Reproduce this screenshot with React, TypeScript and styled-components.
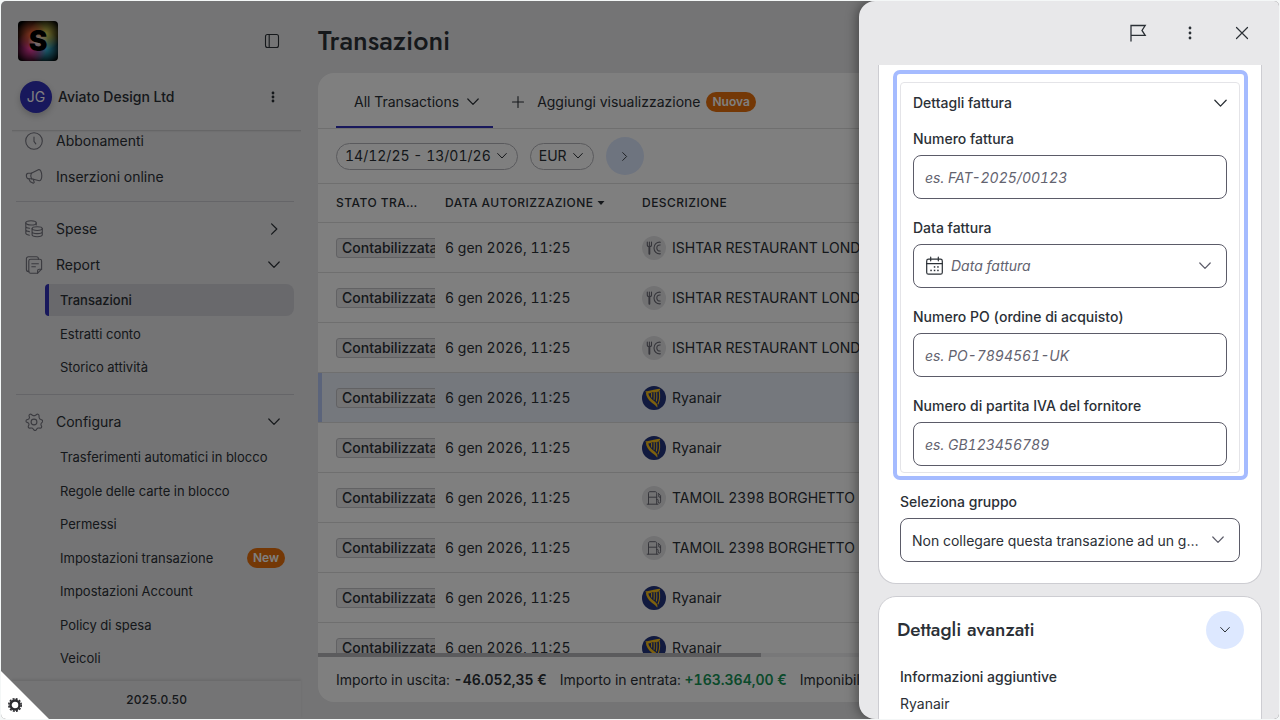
import React from "react";
import styled, { createGlobalStyle, css } from "styled-components";

const GlobalStyle = createGlobalStyle`
  *, *::before, *::after { box-sizing: border-box; }
  html, body { margin: 0; padding: 0; }
  body {
    background: #f4f7f7;
    color: #2b3036;
    font-family: Inter, "Liberation Sans", sans-serif;
    font-size: 14px;
    font-variant-numeric: tabular-nums;
    line-height: 20px;
  }
  button, input, select { font: inherit; color: inherit; font-variant-numeric: inherit; }
  ul { list-style: none; margin: 0; padding: 0; }
  h1, h2, p { margin: 0; }
  svg { display: block; flex: none; }
`;

const Frame = styled.div`
  position: relative;
  display: flex;
  height: 100vh;
  border: 1px solid #f4f7f7;
  border-radius: 6px;
  overflow: hidden;
  background: #e8e8ea;
`;

const Sidebar = styled.aside`
  display: flex;
  flex-direction: column;
  flex: none;
  width: 300px;
`;

const BrandRow = styled.div`
  display: flex;
  align-items: center;
  justify-content: space-between;
  padding: 20px 19px 0 17px;
`;

const Logo = styled.div`
  display: flex;
  align-items: center;
  justify-content: center;
  width: 40px;
  height: 40px;
  border-radius: 4px;
  background:
    radial-gradient(circle at 50% 50%, #ffffff 0, rgba(255, 255, 255, 0) 36%),
    radial-gradient(circle at 34% 34%, #ff6a3c 0, rgba(255, 80, 40, 0) 42%),
    radial-gradient(circle at 68% 32%, #e8e05a 0, rgba(170, 200, 60, 0) 42%),
    radial-gradient(circle at 32% 68%, #ff3fae 0, rgba(230, 40, 150, 0) 43%),
    radial-gradient(circle at 68% 68%, #39c8f0 0, rgba(30, 150, 210, 0) 43%),
    #000000;
  color: #000000;
  font-size: 28px;
  font-weight: 900;
  line-height: 40px;
`;

const IconButton = styled.button`
  display: flex;
  align-items: center;
  justify-content: center;
  width: 20px;
  height: 20px;
  padding: 0;
  border: 0;
  background: none;
  color: #2b3036;
`;

const AccountRow = styled.div`
  display: flex;
  align-items: center;
  gap: 6px;
  padding: 20px 18px 17px 19px;
`;

const Avatar = styled.span`
  display: flex;
  align-items: center;
  justify-content: center;
  width: 32px;
  height: 32px;
  border-radius: 50%;
  background: #3030b8;
  color: #ffffff;
  box-shadow: 0 3px 6px rgba(0, 0, 0, 0.2);
`;

const AccountName = styled.span`
  flex: 1;
  font-weight: 500;
`;

const Nav = styled.nav`
  flex: 1;
  min-height: 0;
  margin-left: 11px;
  overflow: hidden;
  box-shadow: inset 0 3px 2px -2px rgba(0, 0, 0, 0.16);
`;

const NavList = styled.div`
  margin: -7px 7px 0 4px;
`;

const Divider = styled.hr`
  height: 1px;
  margin: 6px 0 9px;
  border: 0;
  background: #cbcbd0;
`;

const NavItem = styled.a`
  display: flex;
  align-items: center;
  gap: 13px;
  height: 36px;
  padding: 0 14px 0 9px;
  color: #2b3036;
  text-decoration: none;

  span { flex: 1; }
  svg:first-child { color: #74747e; }
`;

const SubList = styled.ul<{ $height: number }>`
  display: grid;
  grid-auto-rows: 1fr;
  height: ${(p) => p.$height}px;
  margin: 0 0 10px 29px;
`;

const SubItem = styled.a<{ $active?: boolean }>`
  display: flex;
  align-items: center;
  justify-content: space-between;
  height: 32px;
  margin-top: 1px;
  padding: 0 9px 0 11px;
  border-left: 4px solid transparent;
  border-radius: 4px 8px 8px 4px;
  color: #2b3036;
  font-size: 13px;
  text-decoration: none;
  ${(p) =>
    p.$active &&
    css`
      border-left-color: #3030b8;
      background: #d2d2d8;
      font-weight: 500;
    `}
`;

const Badge = styled.span`
  height: 20px;
  padding: 0 6px;
  border-radius: 10px;
  background: #e8700c;
  color: #ffffff;
  font-size: 12px;
  font-weight: 600;
  line-height: 20px;
`;

const Version = styled.footer`
  height: 38px;
  margin-left: 11px;
  box-shadow: 0 -2px 2px rgba(0, 0, 0, 0.08);
  font-size: 12px;
  font-weight: 500;
  line-height: 38px;
  text-align: center;
`;

const Main = styled.main`
  display: flex;
  flex: 1;
  flex-direction: column;
  min-width: 0;
  padding: 20px 18px 17px 17px;
`;

const PageTitle = styled.h1`
  margin-bottom: 12px;
  font-family: Jost, Lato, sans-serif;
  font-size: 27px;
  font-weight: 500;
  line-height: 40px;
`;

const Card = styled.section`
  display: flex;
  flex: 1;
  flex-direction: column;
  min-height: 0;
  border-radius: 16px;
  background: #ffffff;
  overflow: hidden;
`;

const TabRow = styled.div`
  display: flex;
  flex: none;
  height: 56px;
  padding: 0 18px;
  border-bottom: 1px solid #dededf;
`;

const Tab = styled.button`
  display: flex;
  align-items: center;
  gap: 8px;
  height: 55px;
  padding: 4px 14px 0 18px;
  border: 0;
  border-bottom: 2px solid #3030b8;
  background: none;
`;

const AddView = styled.button`
  display: flex;
  align-items: center;
  gap: 6px;
  height: 55px;
  margin-left: 18px;
  padding: 3px 0 0;
  border: 0;
  background: none;
`;

const AddViewLabel = styled.span`
  display: flex;
  align-items: center;
  gap: 12px;
`;

const FilterRow = styled.div`
  display: flex;
  flex: none;
  align-items: center;
  gap: 12px;
  height: 55px;
  padding: 0 18px;
  border-bottom: 1px solid #dededf;
`;

const Pill = styled.button`
  display: flex;
  align-items: center;
  gap: 6px;
  height: 27px;
  padding: 0 10px 0 8px;
  border: 1px solid #b4b4ba;
  border-radius: 14px;
  background: none;
`;

const RoundButton = styled.button`
  display: flex;
  align-items: center;
  justify-content: center;
  flex: none;
  width: 38px;
  height: 38px;
  padding: 0;
  border: 0;
  border-radius: 50%;
  background: #dde8ff;
`;

const TableArea = styled.div`
  flex: 1;
  min-height: 0;
  overflow: hidden;
`;

const Table = styled.table`
  width: 100%;
  border-collapse: separate;
  border-spacing: 0;
  table-layout: fixed;

  th, td {
    padding: 0;
    border-bottom: 1px solid #dededf;
    text-align: left;
    white-space: nowrap;
    overflow: hidden;
  }
  th {
    height: 39px;
    font-size: 12px;
    font-weight: 500;
    letter-spacing: 0.04em;
  }
  td { height: 50px; }
  th:first-child, td:first-child { padding-left: 18px; }
`;

const HeadLabel = styled.span`
  display: flex;
  align-items: center;
  gap: 3px;
`;

const Row = styled.tr<{ $selected: boolean }>`
  ${(p) =>
    p.$selected &&
    css`
      background: #ebf1fb;
      td:first-child { box-shadow: inset 4px 0 0 #b6c8f6; }
    `}
`;

const Clip = styled.div`
  width: 99px;
  overflow: hidden;
`;

const Status = styled.span`
  display: inline-block;
  height: 20px;
  padding: 0 5px;
  border: 1px solid #c4c4c8;
  border-radius: 3px;
  background: #e8e8ea;
  font-weight: 500;
  line-height: 18px;
  vertical-align: middle;
`;

const Merchant = styled.div`
  display: flex;
  align-items: center;
  gap: 6px;
`;

const MerchantIcon = styled.span`
  display: flex;
  align-items: center;
  justify-content: center;
  width: 24px;
  height: 24px;
  border-radius: 50%;
  background: #e4e4e7;
  color: #6b6b75;
`;

const ScrollTrack = styled.div`
  flex: none;
  height: 4px;
  background: #f0f0f2;
`;

const ScrollThumb = styled.div`
  width: 47%;
  height: 4px;
  background: #b6b6bb;
`;

const Totals = styled.footer`
  display: flex;
  flex: none;
  align-items: center;
  gap: 13px;
  height: 45px;
  padding: 0 18px;
  white-space: nowrap;
`;

const Amount = styled.strong<{ $positive?: boolean }>`
  font-weight: 600;
  color: ${(p) => (p.$positive ? "#169557" : "inherit")};
`;

const Backdrop = styled.div`
  position: absolute;
  inset: 0;
  background: rgba(0, 0, 0, 0.5);
`;

const SettingsCorner = styled.button`
  position: absolute;
  bottom: 0;
  left: 0;
  display: flex;
  align-items: flex-end;
  width: 48px;
  height: 48px;
  padding: 0 0 7px 7px;
  border: 0;
  background: #ffffff;
  clip-path: polygon(0 0, 100% 100%, 0 100%);
  color: #2a2a2e;
`;

const Drawer = styled.aside`
  position: absolute;
  top: 0;
  right: 0;
  bottom: 0;
  display: flex;
  flex-direction: column;
  width: 420px;
  border-radius: 16px 0 0 16px;
  background: #e8e8ea;
  box-shadow: -2px 0 12px rgba(0, 0, 0, 0.4);
  overflow: hidden;
`;

const DrawerHeader = styled.header`
  display: flex;
  flex: none;
  align-items: center;
  justify-content: flex-end;
  gap: 32px;
  height: 64px;
  padding: 0 27px;
`;

const DrawerBody = styled.div`
  display: flex;
  flex: 1;
  flex-direction: column;
  gap: 12px;
  min-height: 0;
  padding: 0 17px 0 19px;
  overflow: hidden;
`;

const Panel = styled.section<{ $continued?: boolean }>`
  flex: none;
  padding: ${(p) => (p.$continued ? "5px 21px 21px" : "14px 17px 21px 21px")};
  border: 1px solid #cdcdd2;
  border-radius: 18px;
  background: #ffffff;
  ${(p) =>
    p.$continued &&
    css`
      border-top: 0;
      border-top-left-radius: 0;
      border-top-right-radius: 0;
    `}
`;

const Highlight = styled.div`
  margin: 0 -8px 12px -7px;
  padding: 8px 4px 3px 3px;
  border: 4px solid #a5bbff;
  border-radius: 7px;
`;

const InvoiceBox = styled.div`
  display: flex;
  flex-direction: column;
  gap: 19px;
  padding: 0 12px 6px;
  border: 1px solid #e4e4e8;
  border-radius: 4px;
`;

const InvoiceToggle = styled.button`
  display: flex;
  align-items: center;
  justify-content: space-between;
  height: 40px;
  margin-bottom: -13px;
  padding: 0;
  border: 0;
  background: none;
  font-weight: 500;
`;

const Field = styled.div`
  display: flex;
  flex-direction: column;
  gap: 6px;
`;

const Label = styled.label`
  font-weight: 500;
`;

const controlBox = css`
  width: 100%;
  height: 44px;
  border: 1px solid #5b5b68;
  border-radius: 8px;
  background: #ffffff;
`;

const TextInput = styled.input`
  ${controlBox}
  padding: 1px 11px 0;

  &::placeholder {
    color: #63636f;
    font-style: italic;
    opacity: 1;
  }
`;

const DateButton = styled.button`
  ${controlBox}
  display: flex;
  align-items: center;
  gap: 6px;
  padding: 0 15px 0 11px;
  text-align: left;

  span {
    flex: 1;
    color: #63636f;
    font-style: italic;
  }
`;

const SelectWrap = styled.div`
  display: grid;
  align-items: center;

  > * { grid-area: 1 / 1; }
  svg {
    justify-self: end;
    margin-right: 16px;
    pointer-events: none;
  }
`;

const Select = styled.select`
  ${controlBox}
  padding: 1px 40px 0 11px;
  appearance: none;
  text-overflow: ellipsis;
  white-space: nowrap;
  overflow: hidden;
`;

const PanelHeader = styled.div`
  display: flex;
  align-items: center;
  justify-content: space-between;
  margin: 0 0 18px -3px;
`;

const PanelTitle = styled.h2`
  font-family: Jost, Lato, sans-serif;
  font-size: 19px;
  font-weight: 500;
  line-height: 28px;
`;

const InfoLabel = styled.p`
  font-weight: 500;
`;

const InfoValue = styled.p`
  margin-top: 7px;
`;

type ChevronProps = { dir?: "down" | "right"; size?: number; color?: string };

const Chevron = ({ dir = "down", size = 12, color = "currentColor" }: ChevronProps) => (
  <svg width={size} height={size} viewBox="0 0 12 12" fill="none" stroke={color} strokeWidth="1.2" strokeLinecap="round" strokeLinejoin="round" aria-hidden="true">
    <path d={dir === "down" ? "M.8 3 6 8.4 11.2 3" : "M3.6.8 8.8 6l-5.2 5.2"} />
  </svg>
);

const Dots = ({ gap = 5 }: { gap?: number }) => (
  <svg width="16" height="16" viewBox="0 0 16 16" fill="currentColor" aria-hidden="true">
    <circle cx="8" cy={8 - gap} r="1.4" />
    <circle cx="8" cy="8" r="1.4" />
    <circle cx="8" cy={8 + gap} r="1.4" />
  </svg>
);

const stroke = { fill: "none", stroke: "currentColor", strokeLinecap: "round", strokeLinejoin: "round", "aria-hidden": true } as const;

const PanelIcon = () => (
  <svg width="16" height="16" viewBox="0 0 16 16" strokeWidth="1.1" {...stroke}>
    <rect x="1.5" y="1.5" width="13" height="13" rx="2" />
    <path d="M5.2 1.5v13" />
  </svg>
);

const ClockIcon = () => (
  <svg width="18" height="18" viewBox="0 0 18 18" strokeWidth="1.1" {...stroke}>
    <circle cx="9" cy="9" r="8.3" />
    <path d="M9 5v4.4l1.8 2.4" />
  </svg>
);

const MegaphoneIcon = () => (
  <svg width="18" height="18" viewBox="0 0 18 18" strokeWidth="1.1" {...stroke}>
    <path d="M6.3 5.3 13.8 1.6c1.6-.3 3 2.7 3 6.1s-1.2 5.2-2.6 5.1l-7.6-2" />
    <path d="M6.3 5.3H3.2C1.8 5.5 1.2 6.6 1.4 8.2s1 2.6 2.3 2.6h2.9" />
    <path d="M6.3 5.3c-.8 1.8-.7 3.8.3 5.5M3.8 10.8l1.5 3 2.6 1.3c1 .2 1.6-.6 1.2-1.4L8.2 11.3" />
  </svg>
);

const CoinsIcon = () => (
  <svg width="18" height="18" viewBox="0 0 18 18" strokeWidth="1.1" {...stroke}>
    <ellipse cx="6" cy="2.9" rx="5.2" ry="2.1" />
    <path d="M.8 2.9v10.4c0 .9 1.5 1.6 3.6 1.9M11.2 2.9v2M.8 6.4c0 .9 1.6 1.6 3.8 1.8M.8 9.8c0 .9 1.5 1.6 3.6 1.8" />
    <ellipse cx="12.2" cy="8.6" rx="5.1" ry="1.9" />
    <path d="M7.1 8.6v6.2c0 1.1 2.3 1.9 5.1 1.9s5.1-.8 5.1-1.9V8.6M7.1 11.7c0 1.1 2.3 1.9 5.1 1.9s5.1-.8 5.1-1.9" />
  </svg>
);

const ReportIcon = () => (
  <svg width="18" height="18" viewBox="0 0 18 18" strokeWidth="1.1" {...stroke}>
    <path d="M5.6 3.2h9.2a1.8 1.8 0 0 1 1.8 1.8v8.2l-4 4H5.6a1.8 1.8 0 0 1-1.8-1.8V5a1.8 1.8 0 0 1 1.8-1.8Z" />
    <path d="M16.6 13.2h-2.4a1.6 1.6 0 0 0-1.6 1.6v2.4M6.8 7.7h6.6M6.8 10.7h3.6" />
    <path d="M3.8 15.4h-.4a2 2 0 0 1-2-2V2.8a2 2 0 0 1 2-2h8a2 2 0 0 1 2 2v.4" />
  </svg>
);

const GearIcon = () => (
  <svg width="18" height="18" viewBox="0 0 18 18" strokeWidth="1.1" {...stroke}>
    <circle cx="9" cy="9" r="2.9" />
    <path d="M6 1.2 7.5 2.3c.9.6 2.1.6 3 0L12 1.2c.9-.3 2 .4 2 1.4l.1 1.9c.1 1 .8 1.8 1.8 2l1 .4c.9.4 1 1.6.4 2.2l-.8.9a2.2 2.2 0 0 0-.3 2.4l.4.9c.3.9-.4 1.9-1.4 1.8l-1.6-.1a2.1 2.1 0 0 0-1.9 1.1l-.5.8c-.6.8-1.8.8-2.3 0l-.6-.8A2.1 2.1 0 0 0 6.4 15l-1.7.1c-1 .1-1.7-.9-1.4-1.8l.4-.9A2.2 2.2 0 0 0 3.4 10l-2-1c-.7-.7-.4-1.9.4-2.2l1-.3c1-.2 1.6-1 1.7-2L4 2.6c0-1 1.1-1.7 2-1.4Z" />
  </svg>
);

const RestaurantIcon = () => (
  <svg width="16" height="16" viewBox="0 0 16 16" strokeWidth="1.1" {...stroke}>
    <path d="M1.3 2v3c0 1 .8 1.7 2.1 1.7S5.5 6 5.5 5V2M3.4 2v11.8" />
    <path d="M3.4 7v6.8" strokeWidth="1.8" />
    <path d="M14.4 2.2C10.6 1.9 8 4.5 8 8s2.6 6.1 6.4 5.8M14.2 5c-2-.2-3.4 1.1-3.4 3s1.4 3.2 3.4 3" />
  </svg>
);

const FuelIcon = () => (
  <svg width="16" height="16" viewBox="0 0 16 16" strokeWidth="1" {...stroke}>
    <path d="M2.5 14V3.2c0-.9.6-1.5 1.5-1.5h5.2c.9 0 1.5.6 1.5 1.5V14M1.2 14.2h10.8M2.5 7.2h8.2" />
    <path d="M10.7 9.5h.8c.5 0 .7.3.7.8v1.5c0 .8.5 1.3 1.2 1.3s1.2-.5 1.2-1.3V5.5L12.4 3.3M12.8 4.4v2.4l1.8.7" />
  </svg>
);

const HarpLogo = () => (
  <svg width="24" height="24" viewBox="0 0 24 24" aria-hidden="true">
    <circle cx="12" cy="12" r="12" fill="#22347e" />
    <path d="M3.300 5c1.500.5 3-.3 5-.6 3.300-.5 6.200-1.500 10-1.600-.2 1.800-1.200 2.700-3 3.100-2.500.5-4.300-.2-6.300.8-1.200.6-2.200 1.200-3.200.6-1-.4-2-1-2.500-2.300Z" fill="#f8c01c" />
    <path d="M3.800 6.300c.4 4.500 2.400 7.600 6 10.500 2.400 1.800 4.600 3 5.400 5 .8-2.200 0-4.200-2.200-6C9.200 12.900 6.900 10.700 6.100 6.800Z" fill="#f8c01c" />
    <path d="M17.200 5c.9 4.600.6 8.700-1.200 13.200M14.700 6.200c.3 3.400.2 6-.3 9.200M12.100 6.300c.2 2.700.2 4.800 0 7.400M9.600 6.800v4.600" fill="none" stroke="#f8c01c" strokeWidth="1.100" />
  </svg>
);

const FlagIcon = () => (
  <svg width="18" height="18" viewBox="0 0 18 18" strokeWidth="1.3" {...stroke}>
    <path d="M2 17V1.5h14.200L13 6.400l3.200 4.900H2" strokeLinejoin="miter" />
  </svg>
);

const CloseIcon = () => (
  <svg width="14" height="14" viewBox="0 0 14 14" strokeWidth="1.2" {...stroke}>
    <path d="m1.500 1.500 11 11M12.500 1.500l-11 11" />
  </svg>
);

const PlusIcon = () => (
  <svg width="14" height="14" viewBox="0 0 14 14" strokeWidth="1.1" {...stroke}>
    <path d="M7 1.500v11M1.500 7h11" />
  </svg>
);

const CalendarIcon = () => (
  <svg width="20" height="20" viewBox="0 0 20 20" strokeWidth="1.2" {...stroke}>
    <rect x="1.700" y="3.200" width="15.600" height="15" rx="1.800" />
    <path d="M1.700 7.700h15.600M5.700 1.200v3.600M13.300 1.200v3.600" />
    <g fill="currentColor" stroke="none">
      <rect x="8.800" y="10.200" width="1.500" height="1.500" />
      <rect x="12.200" y="10.200" width="1.500" height="1.500" />
      <rect x="5.300" y="13.700" width="1.500" height="1.500" />
      <rect x="8.800" y="13.700" width="1.500" height="1.500" />
      <rect x="12.200" y="13.700" width="1.500" height="1.500" />
    </g>
  </svg>
);

const CogIcon = () => (
  <svg width="14" height="14" viewBox="0 0 14 14" fill="none" stroke="currentColor" aria-hidden="true">
    <circle cx="7" cy="7" r="4.500" strokeWidth="2.400" />
    <circle cx="7" cy="7" r="6.200" strokeWidth="1.600" strokeDasharray="2 1.246" />
  </svg>
);

const SortIcon = () => (
  <svg width="8" height="4" viewBox="0 0 8 4" fill="currentColor" aria-hidden="true">
    <path d="M.5 0h7L4 4Z" />
  </svg>
);

const reportLinks = ["Transazioni", "Estratti conto", "Storico attività"];
const configLinks = [
  "Trasferimenti automatici in blocco",
  "Regole delle carte in blocco",
  "Permessi",
  "Impostazioni transazione",
  "Impostazioni Account",
  "Policy di spesa",
  "Veicoli",
];

type Kind = "food" | "air" | "fuel";

const transactions: { name: string; kind: Kind; selected?: boolean }[] = [
  { name: "ISHTAR RESTAURANT LONDON", kind: "food" },
  { name: "ISHTAR RESTAURANT LONDON", kind: "food" },
  { name: "ISHTAR RESTAURANT LONDON", kind: "food" },
  { name: "Ryanair", kind: "air", selected: true },
  { name: "Ryanair", kind: "air" },
  { name: "TAMOIL 2398 BORGHETTO L", kind: "fuel" },
  { name: "TAMOIL 2398 BORGHETTO L", kind: "fuel" },
  { name: "Ryanair", kind: "air" },
  { name: "Ryanair", kind: "air" },
];

const kindIcon: Record<Kind, React.ReactNode> = {
  food: <RestaurantIcon />,
  air: <HarpLogo />,
  fuel: <FuelIcon />,
};

const TextField = ({ id, label, placeholder }: { id: string; label: string; placeholder: string }) => (
  <Field>
    <Label htmlFor={id}>{label}</Label>
    <TextInput id={id} type="text" placeholder={placeholder} />
  </Field>
);

export default function App() {
  return (
    <>
      <GlobalStyle />
      <Frame>
        <Sidebar>
          <BrandRow>
            <Logo>S</Logo>
            <IconButton aria-label="Comprimi menu">
              <PanelIcon />
            </IconButton>
          </BrandRow>
          <AccountRow>
            <Avatar>JG</Avatar>
            <AccountName>Aviato Design Ltd</AccountName>
            <IconButton aria-label="Menu account">
              <Dots gap={4} />
            </IconButton>
          </AccountRow>
          <Nav>
            <NavList>
              <NavItem href="#abbonamenti"><ClockIcon /><span>Abbonamenti</span></NavItem>
              <NavItem href="#inserzioni"><MegaphoneIcon /><span>Inserzioni online</span></NavItem>
              <Divider />
              <NavItem href="#spese"><CoinsIcon /><span>Spese</span><Chevron dir="right" /></NavItem>
              <NavItem href="#report"><ReportIcon /><span>Report</span><Chevron /></NavItem>
              <SubList $height={101}>
                {reportLinks.map((text, i) => (
                  <li key={text}><SubItem href="#report" $active={i === 0}>{text}</SubItem></li>
                ))}
              </SubList>
              <Divider />
              <NavItem href="#configura"><GearIcon /><span>Configura</span><Chevron /></NavItem>
              <SubList $height={235}>
                {configLinks.map((text) => (
                  <li key={text}>
                    <SubItem href="#configura">
                      {text}
                      {text === "Impostazioni transazione" && <Badge>New</Badge>}
                    </SubItem>
                  </li>
                ))}
              </SubList>
            </NavList>
          </Nav>
          <Version>2025.0.50</Version>
        </Sidebar>

        <Main>
          <PageTitle>Transazioni</PageTitle>
          <Card>
            <TabRow>
              <Tab>All Transactions <Chevron /></Tab>
              <AddView>
                <AddViewLabel><PlusIcon />Aggiungi visualizzazione</AddViewLabel>
                <Badge>Nuova</Badge>
              </AddView>
            </TabRow>
            <FilterRow>
              <Pill>14/12/25 - 13/01/26 <Chevron size={10} /></Pill>
              <Pill>EUR <Chevron size={10} /></Pill>
              <RoundButton aria-label="Altri filtri"><Chevron dir="right" size={9} /></RoundButton>
            </FilterRow>
            <TableArea>
              <Table>
                <colgroup>
                  <col style={{ width: 127 }} />
                  <col style={{ width: 197 }} />
                  <col />
                </colgroup>
                <thead>
                  <tr>
                    <th>STATO TRA...</th>
                    <th><HeadLabel>DATA AUTORIZZAZIONE <SortIcon /></HeadLabel></th>
                    <th>DESCRIZIONE</th>
                  </tr>
                </thead>
                <tbody>
                  {transactions.map((t, i) => (
                    <Row key={i} $selected={!!t.selected}>
                      <td><Clip><Status>Contabilizzata</Status></Clip></td>
                      <td>6 gen 2026, 11:25</td>
                      <td>
                        <Merchant>
                          <MerchantIcon>{kindIcon[t.kind]}</MerchantIcon>
                          {t.name}
                        </Merchant>
                      </td>
                    </Row>
                  ))}
                </tbody>
              </Table>
            </TableArea>
            <ScrollTrack><ScrollThumb /></ScrollTrack>
            <Totals>
              <span>Importo in uscita: <Amount>-46.052,35 €</Amount></span>
              <span>Importo in entrata: <Amount $positive>+163.364,00 €</Amount></span>
              <span>Imponibile</span>
            </Totals>
          </Card>
        </Main>

        <Backdrop />
        <SettingsCorner aria-label="Preferenze"><CogIcon /></SettingsCorner>

        <Drawer>
          <DrawerHeader>
            <IconButton aria-label="Segnala"><FlagIcon /></IconButton>
            <IconButton aria-label="Altre azioni"><Dots /></IconButton>
            <IconButton aria-label="Chiudi"><CloseIcon /></IconButton>
          </DrawerHeader>
          <DrawerBody>
            <Panel $continued>
              <Highlight>
                <InvoiceBox>
                  <InvoiceToggle aria-expanded="true">Dettagli fattura <Chevron size={13} /></InvoiceToggle>
                  <TextField id="invoice-number" label="Numero fattura" placeholder="es. FAT-2025/00123" />
                  <Field>
                    <Label htmlFor="invoice-date">Data fattura</Label>
                    <DateButton id="invoice-date" type="button">
                      <CalendarIcon /><span>Data fattura</span><Chevron color="#5b5b68" />
                    </DateButton>
                  </Field>
                  <TextField id="po-number" label="Numero PO (ordine di acquisto)" placeholder="es. PO-7894561-UK" />
                  <TextField id="vat-number" label="Numero di partita IVA del fornitore" placeholder="es. GB123456789" />
                </InvoiceBox>
              </Highlight>
              <Field>
                <Label htmlFor="group">Seleziona gruppo</Label>
                <SelectWrap>
                  <Select id="group">
                    <option>Non collegare questa transazione ad un gruppo</option>
                  </Select>
                  <Chevron color="#5b5b68" />
                </SelectWrap>
              </Field>
            </Panel>
            <Panel>
              <PanelHeader>
                <PanelTitle>Dettagli avanzati</PanelTitle>
                <RoundButton aria-label="Mostra dettagli avanzati"><Chevron size={10} /></RoundButton>
              </PanelHeader>
              <InfoLabel>Informazioni aggiuntive</InfoLabel>
              <InfoValue>Ryanair</InfoValue>
            </Panel>
          </DrawerBody>
        </Drawer>
      </Frame>
    </>
  );
}
